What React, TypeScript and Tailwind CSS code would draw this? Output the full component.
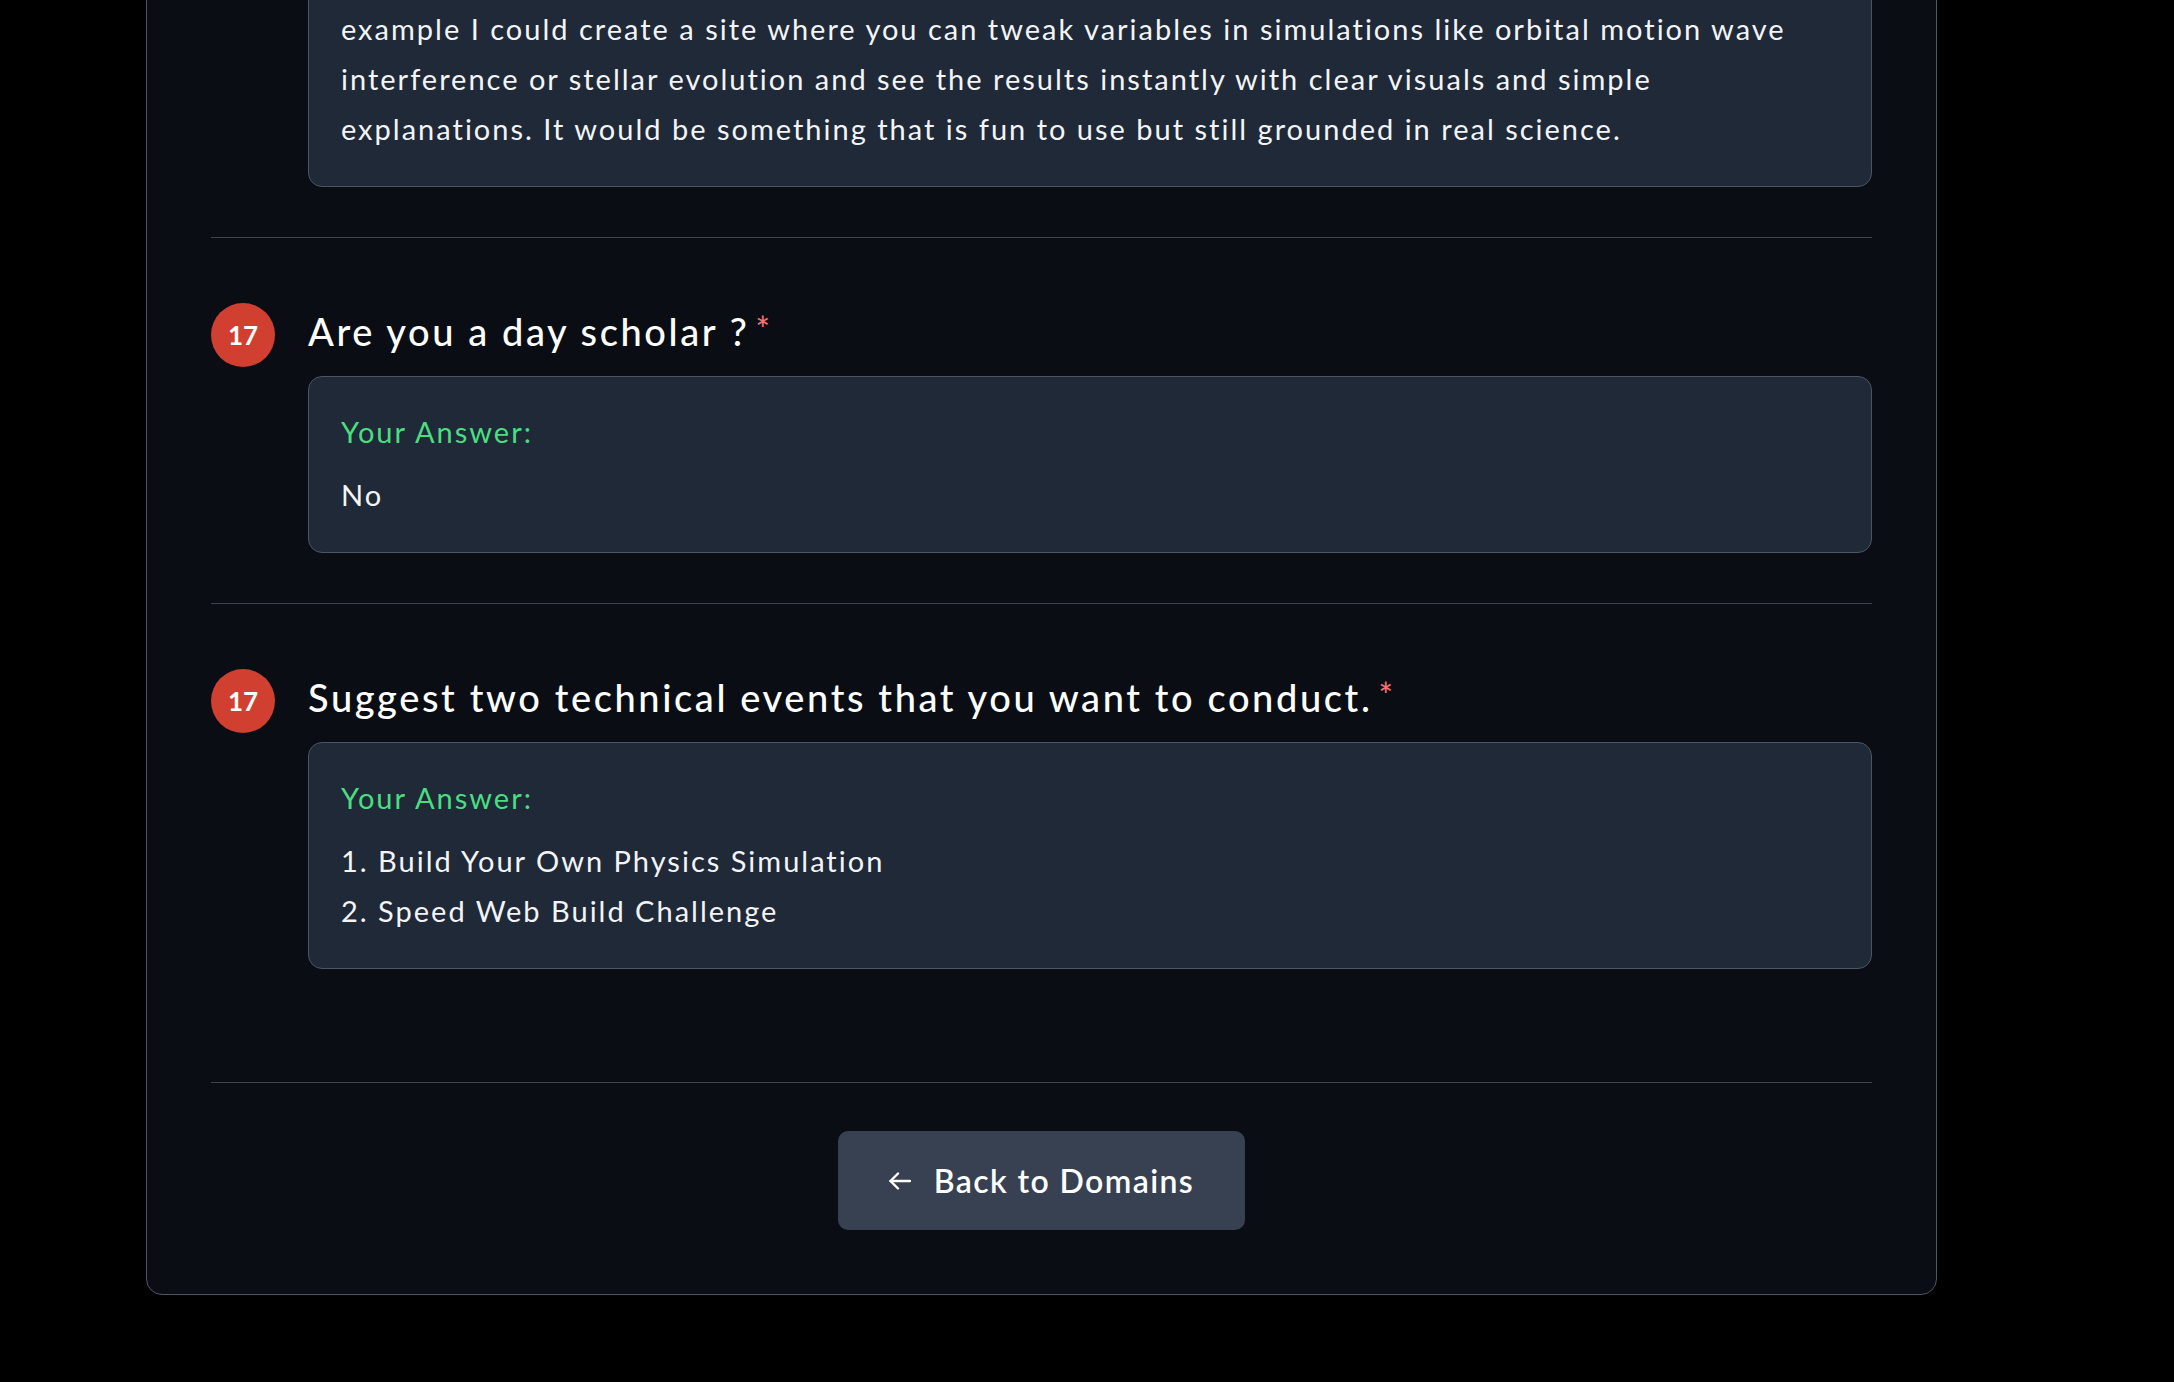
import React from "react";

function AnswerBox({ lines }: { lines: string[] }) {
  return (
    <div className="rounded-[14px] border border-[#4b5563] bg-[#1f2937] p-8">
      <div className="mb-4 text-[29px] leading-[45px] tracking-[2px] text-[#4ade80]">
        Your Answer:
      </div>
      {lines.map((line, i) => (
        <div
          key={i}
          className="whitespace-nowrap text-[29px] leading-[50px] tracking-[2px] text-[#f3f4f6]"
        >
          {line}
        </div>
      ))}
    </div>
  );
}

function Question({
  number,
  title,
  lines,
  last,
}: {
  number: number;
  title: string;
  lines: string[];
  last?: boolean;
}) {
  return (
    <div
      className={`flex items-start gap-[33px] border-b border-[#3b4352] pt-[65px] ${
        last ? "pb-[113px]" : "pb-[50px]"
      }`}
    >
      <div className="flex h-16 w-16 shrink-0 items-center justify-center rounded-full bg-[#d03f30] text-[26px] font-bold text-white">
        {number}
      </div>
      <div className="flex-1">
        <h3 className="mt-[3px] text-[38px] font-medium leading-[51px] tracking-[2.6px] text-white">
          {title}
          <span className="relative top-[8px] ml-[6px] align-top text-[34px] leading-[30px] tracking-normal text-[#f87171]">
            *
          </span>
        </h3>
        <div className="mt-[19px]">
          <AnswerBox lines={lines} />
        </div>
      </div>
    </div>
  );
}

export default function App() {
  const previous = [
    "example I could create a site where you can tweak variables in simulations like orbital motion wave",
    "interference or stellar evolution and see the results instantly with clear visuals and simple",
    "explanations. It would be something that is fun to use but still grounded in real science.",
  ];

  return (
    <div className="min-h-screen overflow-hidden bg-black font-['Lato',sans-serif]">
      <div className="ml-[146px] mt-[-155px] w-[1791px] rounded-2xl border border-[#4b5563] bg-[#0a0d14] px-16 py-16">
        <div className="border-b border-[#3b4352] pb-[50px] pl-[97px]">
          <AnswerBox lines={previous} />
        </div>

        <Question number={17} title="Are you a day scholar ?" lines={["No"]} />
        <Question
          number={17}
          title="Suggest two technical events that you want to conduct."
          lines={["1. Build Your Own Physics Simulation", "2. Speed Web Build Challenge"]}
          last
        />

        <div className="flex justify-center pt-12">
          <button className="inline-flex h-[99px] items-center gap-[23px] rounded-[10px] bg-[#374151] px-[51px] text-[32px] font-semibold tracking-[1.4px] text-white">
            <svg width="22" height="18" viewBox="0 0 22 18" fill="none" stroke="currentColor" strokeWidth="2.4" strokeLinecap="round" strokeLinejoin="round">
              <path d="M21 9H1.5" />
              <path d="M9 1.5 1.5 9 9 16.5" />
            </svg>
            Back to Domains
          </button>
        </div>
      </div>
    </div>
  );
}
